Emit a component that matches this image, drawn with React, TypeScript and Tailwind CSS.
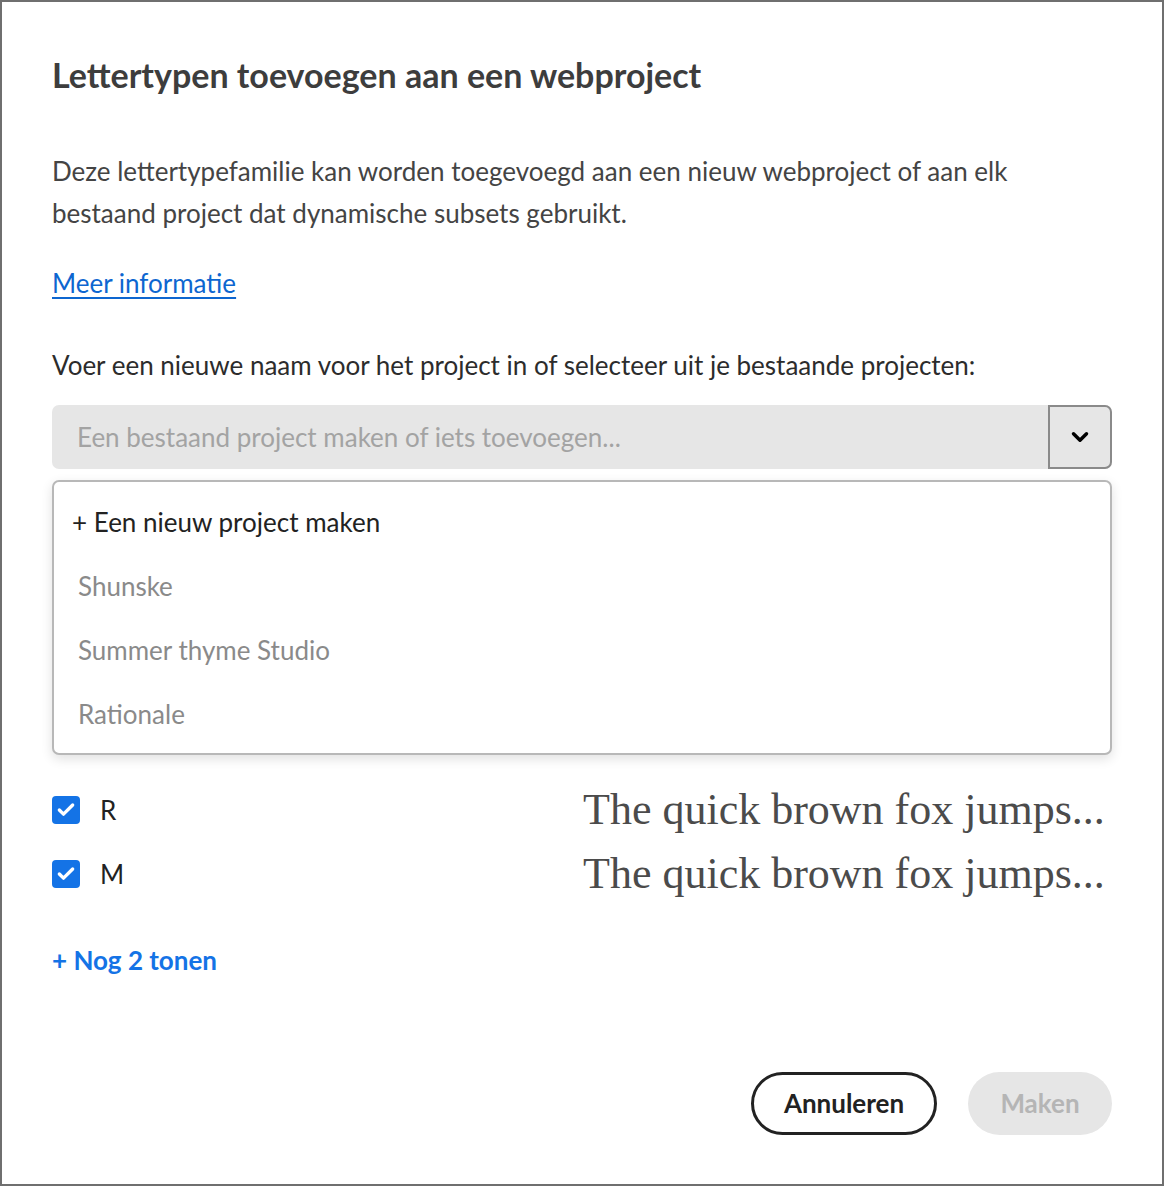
import { Check, ChevronDown } from 'lucide-react';

const projects = ['Shunske', 'Summer thyme Studio', 'Rationale'];

const styles = [
  { label: 'R', weight: 'font-normal' },
  { label: 'M', weight: 'font-medium' },
];

export default function App() {
  return (
    <div className="min-h-[1186px] w-[1164px] border-2 border-[#6f6f6f] bg-white font-['Lato',sans-serif] text-[#2c2c2c]">
      <div className="px-[50px] pt-[50px]">
        {/* Header */}
        <h1 className="text-[34px] font-bold leading-[46px] text-[#3d3d3d]">
          Lettertypen toevoegen aan een webproject
        </h1>

        <p className="mt-[52px] max-w-[1000px] text-[26px] leading-[42px] text-[#444]">
          Deze lettertypefamilie kan worden toegevoegd aan een nieuw webproject of aan elk bestaand project dat dynamische subsets gebruikt.
        </p>

        <a href="#" className="mt-[33px] inline-block text-[26px] leading-[32px] text-[#0d66d0] underline underline-offset-[4px]">
          Meer informatie
        </a>

        <p className="mt-[50px] text-[26px] leading-[32px] text-[#2c2c2c]">
          Voer een nieuwe naam voor het project in of selecteer uit je bestaande projecten:
        </p>

        {/* Combobox */}
        <div className="relative mt-[24px]">
          <div className="flex h-[64px] w-full items-stretch rounded-[7px] bg-[#e6e6e6]">
            <div className="flex flex-1 items-center pl-[25px] text-[26px] text-[#a3a3a3]">
              Een bestaand project maken of iets toevoegen...
            </div>
            <button className="flex w-[64px] items-center justify-center rounded-r-[7px] border-2 border-[#8a8a8a] bg-[#e6e6e6]">
              <ChevronDown className="h-[26px] w-[26px] text-black" strokeWidth={3.2} />
            </button>
          </div>

          {/* Dropdown menu */}
          <div className="absolute left-0 top-[75px] z-10 w-full rounded-[7px] border-2 border-[#b8b8b8] bg-white pb-[7px] pt-[8px] shadow-[0_4px_12px_rgba(0,0,0,0.12)]">
            <div className="flex h-[64px] items-center pl-[18px] text-[26px] text-[#222]">
              + Een nieuw project maken
            </div>
            {projects.map((p) => (
              <div key={p} className="flex h-[64px] items-center pl-[24px] text-[26px] text-[#8a8a8a]">
                {p}
              </div>
            ))}
          </div>
        </div>

        {/* Styles */}
        <div className="mt-[323px] flex flex-col gap-[28px]">
          {styles.map((s) => (
            <div key={s.label} className="flex h-[36px] items-center">
              <div className="flex h-[28px] w-[28px] items-center justify-center rounded-[4px] bg-[#1473e6]">
                <Check className="h-[20px] w-[20px] text-white" strokeWidth={4} />
              </div>
              <span className="ml-[20px] w-[483px] text-[26px] text-[#222]">{s.label}</span>
              <span className={`font-['Liberation_Serif',serif] text-[44px] leading-[48px] text-[#4b4b4b] ${s.weight}`}>
                The quick brown fox jumps...
              </span>
            </div>
          ))}
        </div>

        <button className="mt-[52px] block text-[26px] font-bold leading-[32px] text-[#1473e6]">+ Nog 2 tonen</button>

        {/* Footer */}
        <div className="mt-[96px] flex justify-end gap-[31px]">
          <button className="h-[63px] w-[186px] rounded-full border-[3px] border-[#222] text-[26px] font-bold text-[#222]">
            Annuleren
          </button>
          <button className="h-[63px] w-[144px] rounded-full bg-[#e6e6e6] text-[26px] font-bold text-[#b5b5b5]">
            Maken
          </button>
        </div>
      </div>
    </div>
  );
}
